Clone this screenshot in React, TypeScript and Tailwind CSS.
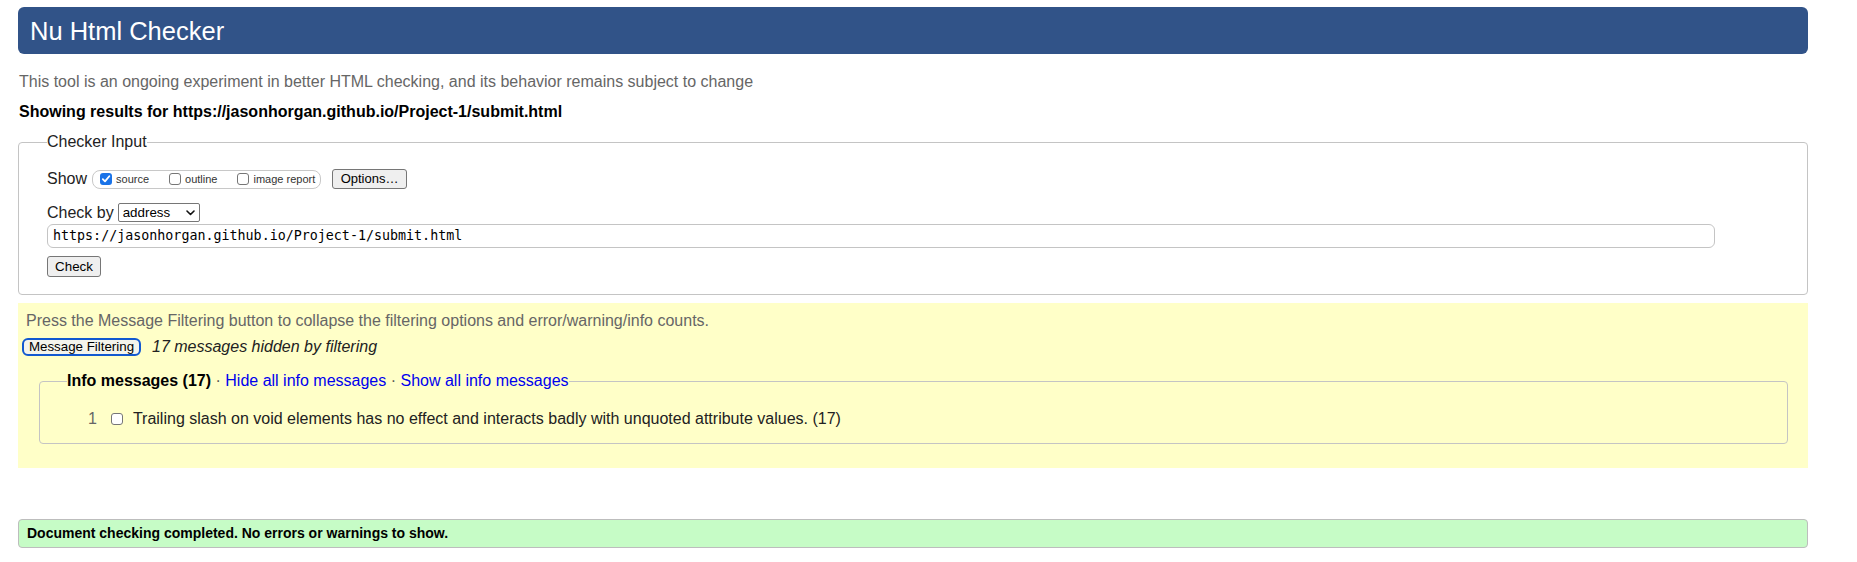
export default function App() {
  const sans = "font-['Liberation_Sans','Helvetica','Arial',sans-serif]"

  return (
    <div className={`min-h-screen bg-white pl-[18px] pr-[49px] pt-[7px] text-[#222] ${sans}`}>
      {/* header */}
      <h1 className="flex h-[47px] items-center rounded-[6px] bg-[#315388] pl-[12px] text-[25.5px] font-normal leading-[30px] text-white">
        Nu Html Checker
      </h1>

      <p className="mt-[19px] pl-[1px] text-[16px] leading-[18px] text-[#666]">
        This tool is an ongoing experiment in better HTML checking, and its behavior remains subject to change
      </p>
      <p className="mt-[12px] pl-[1px] text-[16px] font-bold leading-[18px] text-black">
        Showing results for https://jasonhorgan.github.io/Project-1/submit.html
      </p>

      {/* checker input */}
      <fieldset className="mt-[12px] rounded-[4px] border border-[#c4c4c4] pb-[17px] pl-[28px] pr-[28px] pt-[18px]">
        <legend className="text-[16px] leading-[18px] text-[#222]">Checker Input</legend>

        <div className="flex h-[20px] items-center">
          <span className="text-[16px] leading-[18px]">Show</span>
          <div className="ml-[5px] flex h-[19px] w-[229px] items-center gap-[20px] rounded-[8px] border border-[#c8c8c8] pl-[7px]">
            <label className="flex items-center">
              <span className="flex h-[12px] w-[12px] items-center justify-center rounded-[3px] bg-[#1a73e8]">
                <svg width="10" height="10" viewBox="0 0 10 10">
                  <path d="M1.8 5.2 L4 7.4 L8.3 2.2" fill="none" stroke="white" strokeWidth="1.8" strokeLinecap="round" strokeLinejoin="round" />
                </svg>
              </span>
              <span className="ml-[4px] text-[11px] leading-[12px] text-[#333]">source</span>
            </label>
            <label className="flex items-center">
              <span className="h-[12px] w-[12px] rounded-[3px] border border-[#767676] bg-white" />
              <span className="ml-[4px] text-[11px] leading-[12px] text-[#333]">outline</span>
            </label>
            <label className="flex items-center">
              <span className="h-[12px] w-[12px] rounded-[3px] border border-[#767676] bg-white" />
              <span className="ml-[4px] text-[11px] leading-[12px] text-[#333]">image report</span>
            </label>
          </div>
          <button className="ml-[11px] flex h-[20px] w-[75px] items-center justify-center rounded-[3px] border border-[#767676] bg-[#efefef] text-[13px] leading-[16px] text-black">
            Options…
          </button>
        </div>

        <div className="mt-[14px] flex h-[19px] items-center">
          <span className="text-[16px] leading-[18px]">Check by</span>
          <div className="ml-[4px] flex h-[19px] w-[82px] items-center justify-between rounded-[2px] border border-[#767676] bg-white pl-[4px] pr-[4px]">
            <span className="text-[13.33px] leading-[16px] text-black">address</span>
            <svg width="9" height="6" viewBox="0 0 9 6">
              <path d="M1 1 L4.5 4.5 L8 1" fill="none" stroke="#111" strokeWidth="1.6" strokeLinecap="round" strokeLinejoin="round" />
            </svg>
          </div>
        </div>

        <div className="mt-[2px] flex h-[24px] w-[1668px] items-center rounded-[6px] border border-[#c4c4c4] bg-white pl-[5px] font-['DejaVu_Sans_Mono','Liberation_Mono',monospace] text-[13.33px] text-black">
          https://jasonhorgan.github.io/Project-1/submit.html
        </div>

        <button className="mt-[8px] flex h-[21px] w-[54px] items-center justify-center rounded-[3px] border border-[#767676] bg-[#efefef] text-[13.33px] leading-[16px] text-black">
          Check
        </button>
      </fieldset>

      {/* filtering */}
      <div className="mt-[8px] bg-[#ffffc8] pb-[24px] pt-[9px]">
        <p className="pl-[8px] text-[16px] leading-[18px] text-[#666]">
          Press the Message Filtering button to collapse the filtering options and error/warning/info counts.
        </p>
        <div className="mt-[8px] flex h-[18px] items-center pl-[4px]">
          <button className="flex h-[18px] w-[119px] items-center justify-center rounded-[6px] border-2 border-[#1259d0] bg-[#f4f4ec] text-[13.33px] leading-[14px] text-black">
            Message Filtering
          </button>
          <span className="ml-[11px] text-[16px] italic leading-[18px] text-[#222]">17 messages hidden by filtering</span>
        </div>

        <fieldset className="ml-[21px] mr-[20px] mt-[16px] rounded-[4px] border border-[#c4c4c4] pb-[15px] pl-[27px] pt-[20px]">
          <legend className="text-[16px] leading-[18px]">
            <span className="font-bold text-black">Info messages (17)</span>
            <span className="text-[#555]"> · </span>
            <span className="text-[#0000ee]">Hide all info messages</span>
            <span className="text-[#555]"> · </span>
            <span className="text-[#0000ee]">Show all info messages</span>
          </legend>
          <div className="flex h-[18px] items-center">
            <span className="ml-[21px] text-[16px] leading-[18px] text-[#666]">1</span>
            <span className="ml-[14px] h-[12px] w-[12px] rounded-[3px] border border-[#767676] bg-white" />
            <span className="ml-[10px] text-[16px] leading-[18px] text-[#222]">
              Trailing slash on void elements has no effect and interacts badly with unquoted attribute values. (17)
            </span>
          </div>
        </fieldset>
      </div>

      {/* result */}
      <div className="mt-[51px] flex h-[29px] items-center rounded-[4px] border border-[#bdbdbd] bg-[#c6fcc6] pl-[8px] text-[14px] font-bold text-black">
        Document checking completed. No errors or warnings to show.
      </div>
    </div>
  )
}
